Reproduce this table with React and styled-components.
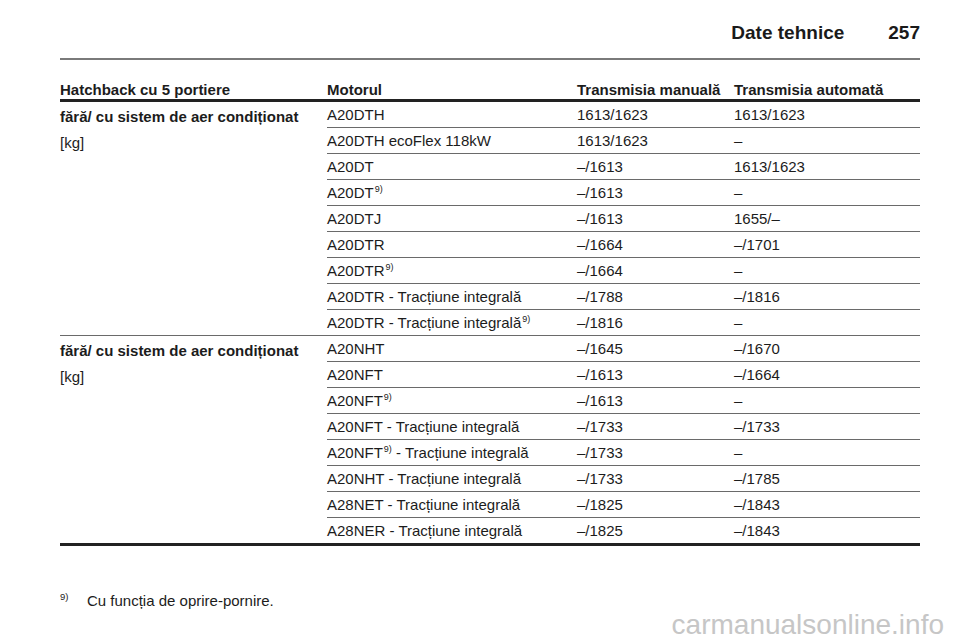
import React from "react";
import styled, { createGlobalStyle } from "styled-components";

const GlobalStyle = createGlobalStyle`
  html, body {
    margin: 0;
    padding: 0;
    background: #ffffff;
  }
  body {
    font-family: "Liberation Sans", Arial, sans-serif;
    color: #1c1c1c;
  }
`;

const Page = styled.div`
  width: 960px;
  height: 642px;
  box-sizing: border-box;
  padding: 0 40px 0 60px;
  position: relative;
  overflow: hidden;
`;

const PageHeader = styled.header`
  display: flex;
  justify-content: flex-end;
  align-items: flex-end;
  gap: 44px;
  height: 60px;
  box-sizing: border-box;
  padding-bottom: 14px;
  border-bottom: 2px solid #7a7a7a;
  font-size: 19px;
  font-weight: bold;
  color: #1a1a1a;
`;

const Table = styled.table`
  width: 860px;
  border-collapse: collapse;
  table-layout: fixed;
  font-size: 15px;
`;

const HeadCell = styled.th`
  text-align: left;
  font-weight: bold;
  height: 20px;
  line-height: 17px;
  padding: 19px 0 0 0;
  vertical-align: middle;
  border-bottom: 3px solid #222;
  white-space: nowrap;
  width: ${(p) => p.$w}px;
`;

const Cell = styled.td`
  height: 25px;
  padding: 0;
  vertical-align: middle;
  white-space: nowrap;
  border-bottom: ${(p) => (p.$last ? "3px solid #222" : "1.5px solid #6a6a6a")};
`;

const GroupCell = styled.td`
  padding: 3px 0 0 0;
  vertical-align: top;
  border-bottom: ${(p) => (p.$last ? "3px solid #222" : "1.5px solid #6a6a6a")};
`;

const GroupTitle = styled.div`
  font-weight: bold;
  line-height: 24px;
`;

const Unit = styled.div`
  line-height: 28px;
`;

const Sup = styled.sup`
  font-size: 9px;
  vertical-align: 6px;
  line-height: 0;
  margin-left: 1px;
`;

const Footnote = styled.div`
  display: flex;
  align-items: baseline;
  gap: 14px;
  margin-top: 46px;
  font-size: 15px;
`;

const FootMark = styled.span`
  font-size: 9.5px;
  position: relative;
  top: -6px;
  width: 13px;
`;

const Watermark = styled.div`
  position: absolute;
  right: 16px;
  bottom: 1px;
  font-size: 28px;
  color: #c6c6c6;
`;

const groups = [
  [
    ["A20DTH", "", "1613/1623", "1613/1623"],
    ["A20DTH ecoFlex 118kW", "", "1613/1623", "–"],
    ["A20DT", "", "–/1613", "1613/1623"],
    ["A20DT", "sup", "–/1613", "–"],
    ["A20DTJ", "", "–/1613", "1655/–"],
    ["A20DTR", "", "–/1664", "–/1701"],
    ["A20DTR", "sup", "–/1664", "–"],
    ["A20DTR - Tracțiune integrală", "", "–/1788", "–/1816"],
    ["A20DTR - Tracțiune integrală", "sup", "–/1816", "–"],
  ],
  [
    ["A20NHT", "", "–/1645", "–/1670"],
    ["A20NFT", "", "–/1613", "–/1664"],
    ["A20NFT", "sup", "–/1613", "–"],
    ["A20NFT - Tracțiune integrală", "", "–/1733", "–/1733"],
    ["A20NFT", "mid", "–/1733", "–"],
    ["A20NHT - Tracțiune integrală", "", "–/1733", "–/1785"],
    ["A28NET - Tracțiune integrală", "", "–/1825", "–/1843"],
    ["A28NER - Tracțiune integrală", "", "–/1825", "–/1843"],
  ],
];

function Engine({ name, note }) {
  if (note === "mid") {
    return (
      <>
        {name}
        <Sup>9)</Sup> - Tracțiune integrală
      </>
    );
  }
  return (
    <>
      {name}
      {note === "sup" && <Sup>9)</Sup>}
    </>
  );
}

export default function App() {
  return (
    <Page>
      <GlobalStyle />
      <PageHeader>
        <span>Date tehnice</span>
        <span>257</span>
      </PageHeader>
      <Table>
        <thead>
          <tr>
            <HeadCell $w={267}>Hatchback cu 5 portiere</HeadCell>
            <HeadCell $w={250}>Motorul</HeadCell>
            <HeadCell $w={157}>Transmisia manuală</HeadCell>
            <HeadCell $w={186}>Transmisia automată</HeadCell>
          </tr>
        </thead>
        <tbody>
          {groups.map((rows, gi) => {
            const lastGroup = gi === groups.length - 1;
            return rows.map((r, ri) => {
              const last = lastGroup && ri === rows.length - 1;
              return (
                <tr key={gi + "-" + ri}>
                  {ri === 0 && (
                    <GroupCell rowSpan={rows.length} $last={lastGroup}>
                      <GroupTitle>fără/ cu sistem de aer condiționat</GroupTitle>
                      <Unit>[kg]</Unit>
                    </GroupCell>
                  )}
                  <Cell $last={last}>
                    <Engine name={r[0]} note={r[1]} />
                  </Cell>
                  <Cell $last={last}>{r[2]}</Cell>
                  <Cell $last={last}>{r[3]}</Cell>
                </tr>
              );
            });
          })}
        </tbody>
      </Table>
      <Footnote>
        <FootMark>9)</FootMark>
        <span>Cu funcția de oprire-pornire.</span>
      </Footnote>
      <Watermark>carmanualsonline.info</Watermark>
    </Page>
  );
}
